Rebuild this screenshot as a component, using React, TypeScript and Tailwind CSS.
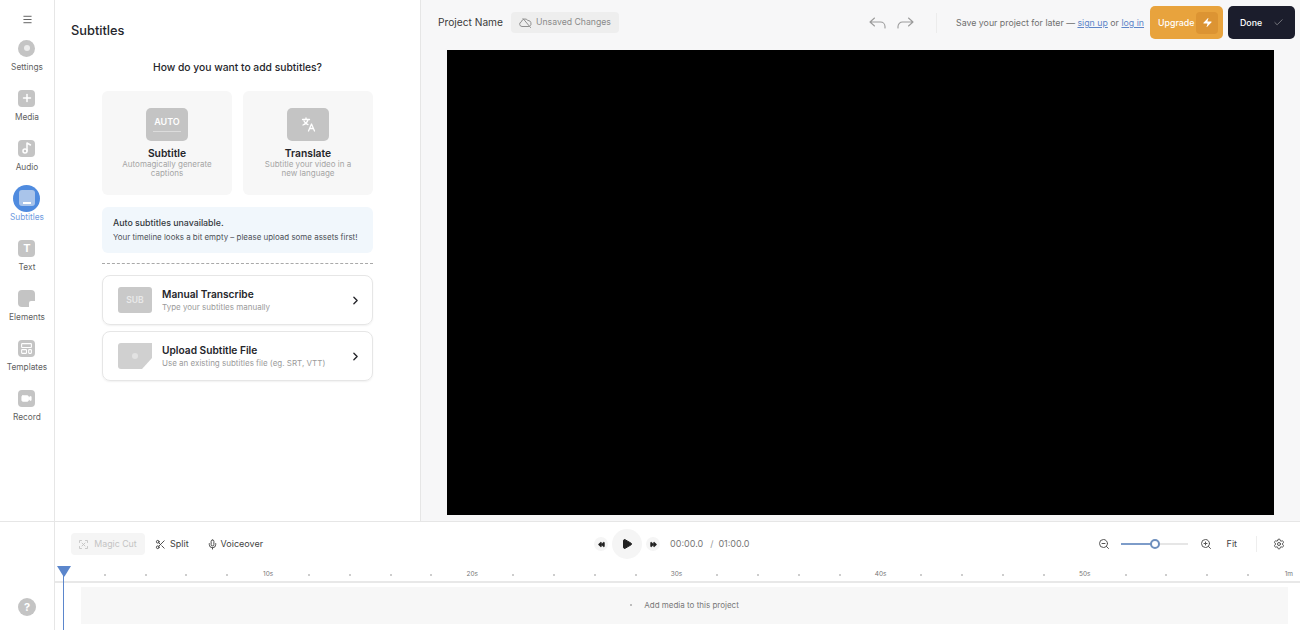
import { ChevronRight, Zap, Check, Scissors, Mic, ZoomIn, ZoomOut, Settings, Menu, Play, Rewind, FastForward, Plus, Music2, Video, LayoutTemplate } from "lucide-react";
import type { ReactNode } from "react";

const Tile = ({ children }: { children: ReactNode }) => (
  <div className="w-[17px] h-[17px] rounded-[4px] bg-[#c4c4c4] flex items-center justify-center text-white">{children}</div>
);

const sideItems: { label: string; icon: ReactNode; active?: boolean }[] = [
  {
    label: "Settings",
    icon: (
      <div className="w-[17px] h-[17px] rounded-full bg-[#c4c4c4] flex items-center justify-center">
        <div className="w-1.5 h-1.5 rounded-full bg-[#ececec]" />
      </div>
    ),
  },
  { label: "Media", icon: <Tile><Plus size={12} strokeWidth={3} /></Tile> },
  { label: "Audio", icon: <Tile><Music2 size={12} strokeWidth={3} /></Tile> },
  {
    label: "Subtitles",
    active: true,
    icon: (
      <div className="w-[27px] h-[27px] rounded-full bg-[#4f8bdf] flex items-center justify-center">
        <div className="w-4 h-4 rounded-[3px] bg-[#a9c4ea] flex items-end justify-center pb-0.5">
          <div className="w-2 h-0.5 bg-white" />
        </div>
      </div>
    ),
  },
  { label: "Text", icon: <Tile><span className="text-[11px] leading-none font-bold">T</span></Tile> },
  {
    label: "Elements",
    icon: (
      <div className="w-[17px] h-[17px] rounded-[4px] rounded-br-[6px] bg-[#c4c4c4] flex items-end justify-end">
        <div className="w-1.5 h-1.5 bg-white rounded-tl-[2px]" />
      </div>
    ),
  },
  { label: "Templates", icon: <Tile><LayoutTemplate size={13} strokeWidth={2} /></Tile> },
  { label: "Record", icon: <Tile><Video size={11} fill="white" /></Tile> },
];

const ticks = Array.from({ length: 31 }, (_, i) => i);

const tickLabel = (i: number) => {
  if (i === 0) return "";
  if (i === 30) return "1m";
  return i % 5 === 0 ? `${i * 2}s` : "";
};

export default function App() {
  return (
    <div className="w-[1300px] h-[630px] overflow-hidden flex flex-col bg-white text-[#25262b] font-['Inter',sans-serif]">
      <div className="flex flex-1 min-h-0">
        <div className="flex">
          {/* Sidebar */}
          <aside className="w-[55px] shrink-0 border-r border-[#e6e6e6] flex flex-col items-center">
            <Menu size={11} className="mt-[13.5px] text-[#555]" />
            <div className="mt-[15px] flex flex-col items-center">
              {sideItems.map((item) => (
                <div key={item.label} className="w-full h-[50px] flex flex-col items-center">
                  <div className="h-[17px] flex items-center justify-center">{item.icon}</div>
                  <span className={`mt-[4px] text-[8.3px] leading-[12px] ${item.active ? "text-[#6f9be0]" : "text-[#5f5f5f]"}`}>
                    {item.label}
                  </span>
                </div>
              ))}
            </div>
          </aside>

          {/* Subtitles panel */}
          <section className="w-[366px] shrink-0 border-r border-[#e6e6e6] relative">
            <h1 className="pl-4 pt-[23px] text-[12.8px] leading-4 font-medium">Subtitles</h1>
            <p className="mt-[20px] text-center text-[10.3px] leading-4 font-medium">How do you want to add subtitles?</p>
            <div className="ml-[47px] w-[271px] mt-[16px] flex flex-col">
              <div className="flex justify-between">
                <div className="w-[130px] h-[104px] rounded-md bg-[#f7f7f7] flex flex-col items-center pt-[17px]">
                  <div className="w-[42px] h-[33px] rounded-[5px] bg-[#c4c4c4] flex flex-col items-center justify-center text-white">
                    <span className="text-[9px] leading-[10px] font-semibold">AUTO</span>
                    <div className="w-[28px] h-px bg-[#dcdcdc] mt-1" />
                  </div>
                  <h2 className="mt-[5px] text-[10.3px] leading-[14px] font-semibold">Subtitle</h2>
                  <p className="text-[8px] leading-[8.5px] text-center text-[#a5a5a5] w-[100px]">Automagically generate captions</p>
                </div>
                <div className="w-[130px] h-[104px] rounded-md bg-[#f7f7f7] flex flex-col items-center pt-[17px]">
                  <div className="w-[42px] h-[33px] rounded-[5px] bg-[#c4c4c4] flex items-center justify-center text-white">
                    <svg width="15" height="15" viewBox="0 0 15 15" fill="none" stroke="white" strokeWidth="1.3" strokeLinecap="round" strokeLinejoin="round">
                      <path d="M1.5 2.5h7M5 1v1.5M7 2.5C6.5 5 4.5 7 2 8M3 4c.8 1.8 2.3 3 4 3.6M7.5 14l3-7 3 7M8.6 11.5h3.8" />
                    </svg>
                  </div>
                  <h2 className="mt-[5px] text-[10.3px] leading-[14px] font-semibold">Translate</h2>
                  <p className="text-[8px] leading-[8.5px] text-center text-[#a5a5a5] w-[100px]">Subtitle your video in a new language</p>
                </div>
              </div>
              <div className="mt-3 h-[46px] rounded-md bg-[#f1f7fc] pl-[11px] flex flex-col justify-center">
                <p className="text-[8.8px] leading-[14px] font-medium text-[#33373d]">Auto subtitles unavailable.</p>
                <p className="text-[7.95px] leading-[14px] text-[#4c5158] whitespace-nowrap">Your timeline looks a bit empty – please upload some assets first!</p>
              </div>
              <div className="mt-[10px] border-t border-dashed border-[#a9a9a9]" />
              <div className="mt-[11px] h-[50px] rounded-lg border border-[#e6e6e6] shadow-[0_1px_2px_rgba(0,0,0,0.06)] flex items-center pl-[15px] pr-[10px]">
                <div className="w-[34px] h-[26px] rounded-[3px] bg-[#c9c9c9] flex items-center justify-center text-[8.5px] font-semibold text-[#e9e9e9]">SUB</div>
                <div className="ml-[10px] flex-1">
                  <h3 className="text-[10.2px] leading-[14px] font-semibold">Manual Transcribe</h3>
                  <p className="text-[8px] leading-[12px] text-[#9b9b9b]">Type your subtitles manually</p>
                </div>
                <ChevronRight size={13} strokeWidth={2.5} />
              </div>
              <div className="mt-[6px] h-[50px] rounded-lg border border-[#e6e6e6] shadow-[0_1px_2px_rgba(0,0,0,0.06)] flex items-center pl-[15px] pr-[10px]">
                <svg width="34" height="26" viewBox="0 0 34 26">
                  <path d="M3 0h31v15L24 26H3a3 3 0 0 1-3-3V3a3 3 0 0 1 3-3z" fill="#d0d0d0" />
                  <circle cx="17" cy="13" r="3" fill="#e2e2e2" />
                </svg>
                <div className="ml-[10px] flex-1">
                  <h3 className="text-[10.2px] leading-[14px] font-semibold">Upload Subtitle File</h3>
                  <p className="text-[8px] leading-[12px] text-[#9b9b9b] whitespace-nowrap">Use an existing subtitles file (eg. SRT, VTT)</p>
                </div>
                <ChevronRight size={13} strokeWidth={2.5} />
              </div>
            </div>
          </section>
        </div>

        {/* Stage */}
        <main className="flex-1 bg-[#f7f7f8] flex flex-col min-w-0">
          <header className="h-[50px] shrink-0 flex items-start pl-[17px] pr-[5px] pt-[6px]">
            <div className="h-[33px] flex items-center">
              <span className="text-[10.2px] text-[#3a3a3a]">Project Name</span>
              <div className="ml-2 w-[108px] h-[21px] rounded-[4px] bg-[#eeeeee] flex items-center justify-center gap-[4px]">
                <svg width="13" height="11" viewBox="0 0 13 11" fill="none" stroke="#8f8f8f" strokeWidth="1" strokeLinecap="round" strokeLinejoin="round">
                  <path d="M3.5 9.5H3a2.4 2.4 0 0 1-.6-4.7A3.6 3.6 0 0 1 8.8 3.4a3.2 3.2 0 0 1 1.8 5.9M4 1.5l7.5 9M3.5 9.5h6" />
                </svg>
                <span className="text-[8.7px] text-[#8a8a8a] whitespace-nowrap">Unsaved Changes</span>
              </div>
            </div>
            <div className="ml-auto h-[33px] flex items-center">
              <svg width="17" height="12" viewBox="0 0 17 12" fill="none" stroke="#9b9b9b" strokeWidth="1.1" strokeLinecap="round" strokeLinejoin="round">
                <path d="M5.5 1 1 5l4.5 4M1 5h10.5a4.5 4.5 0 0 1 4.5 4.5V11" />
              </svg>
              <svg className="ml-[11px]" width="17" height="12" viewBox="0 0 17 12" fill="none" stroke="#9b9b9b" strokeWidth="1.1" strokeLinecap="round" strokeLinejoin="round">
                <path d="M11.5 1 16 5l-4.5 4M16 5H5.5A4.5 4.5 0 0 0 1 9.5V11" />
              </svg>
              <div className="ml-[22px] w-px h-5 bg-[#ececec]" />
              <p className="ml-[19px] text-[8.8px] text-[#6f6f6f] whitespace-nowrap w-[190px]">
                Save your project for later — <span className="text-[#5f86c9] underline">sign up</span> or <span className="text-[#5f86c9] underline">log in</span>
              </p>
              <button className="ml-[4px] w-[73px] h-[33px] rounded-[5px] bg-[#e8a33d] flex items-center pl-2 pr-[5px] justify-between text-white text-[8.8px] font-medium">
                Upgrade
                <span className="w-[22px] h-[22px] rounded-[4px] bg-[#dc9433] flex items-center justify-center">
                  <Zap size={11} fill="white" strokeWidth={0} />
                </span>
              </button>
              <button className="ml-[5px] w-[67px] h-[33px] rounded-[5px] bg-[#1b1d2c] flex items-center pl-3 pr-[11px] justify-between text-white text-[8.8px] font-medium">
                Done
                <Check size={11} strokeWidth={1.25} className="text-[#b5b5b5]" />
              </button>
            </div>
          </header>
          <div className="ml-[26px] w-[827px] h-[465px] bg-black" />
        </main>
      </div>

      {/* Timeline */}
      <footer className="h-[109px] shrink-0 border-t border-[#e6e6e6] flex">
        <div className="w-[55px] shrink-0 border-r border-[#e6e6e6] flex justify-center items-end pb-[14px]">
          <div className="w-[18px] h-[18px] rounded-full bg-[#c4c4c4] text-white text-[11px] font-bold leading-[18px] text-center">?</div>
        </div>
        <div className="flex-1 min-w-0 relative">
          <div className="h-[45px] pt-[11px] flex items-start">
            <div className="ml-4 w-[74px] h-[22px] rounded-[4px] bg-[#f5f5f5] flex items-center justify-center gap-[6px] text-[#c4c4c4]">
              <svg width="9" height="9" viewBox="0 0 9 9" fill="none" stroke="currentColor" strokeWidth="0.9" strokeLinecap="round">
                <path d="M.5 2.5v-2h2M6.500.5h2v2M8.500 6.500v2h-2M2.500 8.500h-2v-2M3 3l3 3M6 3 3 6" />
              </svg>
              <span className="text-[8.8px]">Magic Cut</span>
            </div>
            <div className="ml-[10px] h-[22px] flex items-center gap-[4px] text-[#3f3f3f]">
              <Scissors size={11} />
              <span className="text-[9px]">Split</span>
            </div>
            <div className="ml-[18px] h-[22px] flex items-center gap-[3px] text-[#3f3f3f]">
              <Mic size={11} />
              <span className="text-[9px]">Voiceover</span>
            </div>
            <div className="ml-[331px] h-[22px] flex items-center">
              <div className="w-3.5 h-3.5 rounded-full bg-[#f5f5f5] flex items-center justify-center">
                <Rewind size={7} fill="#222" className="text-[#222]" />
              </div>
              <div className="ml-[4px] w-[30px] h-[30px] rounded-full bg-[#f5f5f5] flex items-center justify-center">
                <Play size={12} fill="#222" className="text-[#222]" />
              </div>
              <div className="ml-[4px] w-3.5 h-3.5 rounded-full bg-[#f5f5f5] flex items-center justify-center">
                <FastForward size={7} fill="#222" className="text-[#222]" />
              </div>
              <span className="ml-[10px] text-[9px] text-[#777] whitespace-nowrap">00:00.0</span>
              <span className="ml-[7px] text-[9px] text-[#999]">/</span>
              <span className="ml-[5px] text-[9px] text-[#777] whitespace-nowrap">01:00.0</span>
            </div>
            <div className="ml-auto pr-[15px] h-[22px] flex items-center">
              <ZoomOut size={12} className="text-[#555]" />
              <div className="ml-[11px] w-[67px] h-0.5 bg-[#e6e6e6] relative">
                <div className="h-full w-[34px] bg-[#7d9cc9]" />
                <div className="absolute left-[29px] -top-1 w-2.5 h-2.5 rounded-full bg-white border-2 border-[#6e8fbd]" />
              </div>
              <ZoomIn size={12} className="ml-[12px] text-[#555]" />
              <span className="ml-[15px] text-[9px] text-[#444]">Fit</span>
              <div className="ml-[19px] w-px h-4 bg-[#eeeeee]" />
              <Settings size={12} className="ml-4 text-[#555]" />
            </div>
          </div>
          <div className="h-[14px] ml-[9px] mr-[11px] pt-[1px] flex justify-between items-center">
            {ticks.map((i) => (
              <div key={i} className="w-0 flex justify-center">
                {tickLabel(i) ? (
                  <span className="text-[6.5px] text-[#777] whitespace-nowrap">{tickLabel(i)}</span>
                ) : i > 0 ? (
                  <span className="w-0.5 h-0.5 mt-[1px] shrink-0 rounded-full bg-[#bdbdbd]" />
                ) : null}
              </div>
            ))}
          </div>
          <div className="h-0.5 bg-[#e8e8e8]" />
          <div className="mt-1 ml-[26px] mr-3 h-[37px] pb-[2px] bg-[#f7f7f7] flex items-center justify-center gap-[12px]">
            <span className="w-0.5 h-0.5 rounded-full bg-[#aaa]" />
            <span className="text-[8px] text-[#777]">Add media to this project</span>
          </div>
          {/* Playhead */}
          <div className="absolute left-[8px] top-[44px] bottom-0 w-px bg-[#5b86cc]" />
          <svg className="absolute left-[2px] top-[44px]" width="14" height="11" viewBox="0 0 14 11">
            <path d="M0 0h14L7.5 10.5h-1z" fill="#5b86cc" />
          </svg>
        </div>
      </footer>
    </div>
  );
}
